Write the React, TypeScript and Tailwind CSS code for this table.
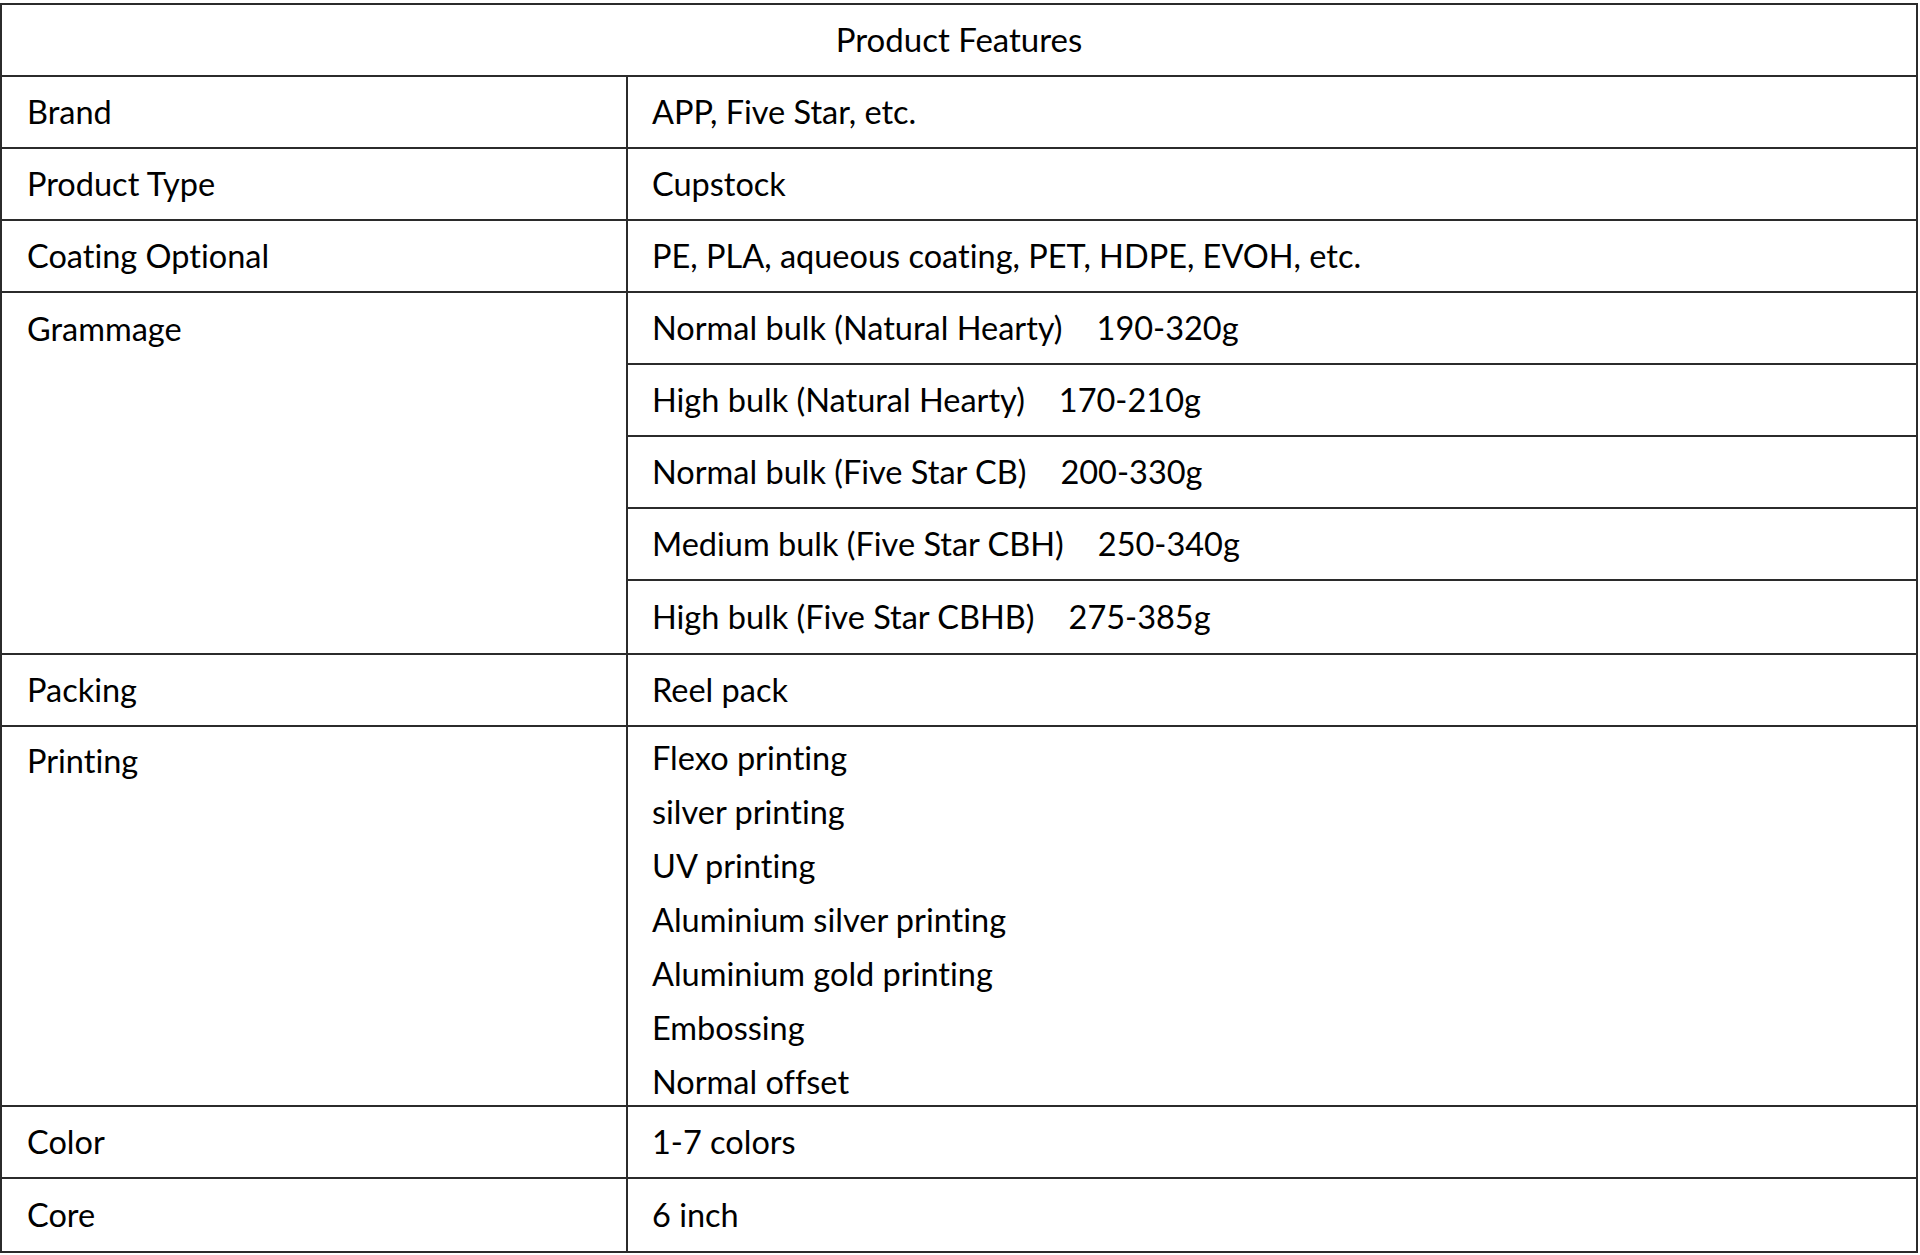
import React from "react";

const simpleRows = [
  { label: "Brand", value: "APP, Five Star, etc." },
  { label: "Product Type", value: "Cupstock" },
  { label: "Coating Optional", value: "PE, PLA, aqueous coating, PET, HDPE, EVOH, etc." },
];

const grammage = [
  { name: "Normal bulk (Natural Hearty)", range: "190-320g" },
  { name: "High bulk (Natural Hearty)", range: "170-210g" },
  { name: "Normal bulk (Five Star CB)", range: "200-330g" },
  { name: "Medium bulk (Five Star CBH)", range: "250-340g" },
  { name: "High bulk (Five Star CBHB)", range: "275-385g" },
];

const printing = [
  "Flexo printing",
  "silver printing",
  "UV printing",
  "Aluminium silver printing",
  "Aluminium gold printing",
  "Embossing",
  "Normal offset",
];

const Row = ({ label, value, last }: { label: string; value: string; last?: boolean }) => (
  <div className={`flex h-[72px] ${last ? "" : "border-b-2 border-[#2b2b2b]"}`}>
    <div className="w-[626px] shrink-0 border-r-2 border-[#2b2b2b] flex items-center pl-[25px]">{label}</div>
    <div className="flex-1 flex items-center pl-[24px]">{value}</div>
  </div>
);

export default function App() {
  return (
    <div className="w-full min-h-screen bg-white pt-[3px] text-black text-[32.5px] [font-variant-ligatures:none] font-['Lato',_'Liberation_Sans',_sans-serif]">
      <div className="w-[1918px] border-2 border-[#2b2b2b]">
        {/* header */}
        <div className="h-[72px] flex items-center justify-center border-b-2 border-[#2b2b2b] text-[33px]">
          Product Features
        </div>

        {simpleRows.map((r) => (
          <Row key={r.label} label={r.label} value={r.value} />
        ))}

        {/* grammage - label spans all sub rows */}
        <div className="flex border-b-2 border-[#2b2b2b]">
          <div className="w-[626px] shrink-0 border-r-2 border-[#2b2b2b] pl-[25px]">
            <div className="h-[72px] flex items-center">Grammage</div>
          </div>
          <div className="flex-1 flex flex-col">
            {grammage.map((g, i) => (
              <div
                key={g.name}
                className={`h-[72px] flex items-center pl-[24px] ${i < grammage.length - 1 ? "border-b-2 border-[#2b2b2b]" : ""}`}
              >
                {g.name}
                <span className="ml-[34px]">{g.range}</span>
              </div>
            ))}
          </div>
        </div>

        <Row label="Packing" value="Reel pack" />

        {/* printing */}
        <div className="flex h-[380px] border-b-2 border-[#2b2b2b]">
          <div className="w-[626px] shrink-0 border-r-2 border-[#2b2b2b] pl-[25px] pt-[4px] leading-[60px]">
            Printing
          </div>
          <div className="flex-1 pl-[24px] pt-[4px] leading-[54px]">
            {printing.map((p) => (
              <div key={p}>{p}</div>
            ))}
          </div>
        </div>

        <Row label="Color" value="1-7 colors" />
        <Row label="Core" value="6 inch" last />
      </div>
    </div>
  );
}
